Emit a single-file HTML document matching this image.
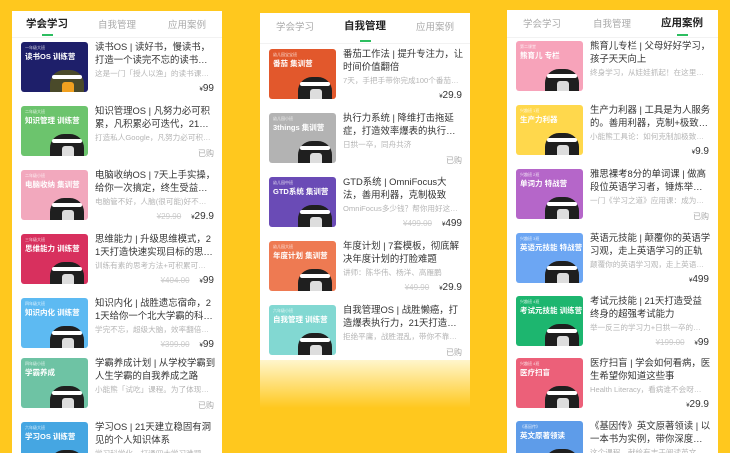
<!DOCTYPE html>
<html><head><meta charset="utf-8"><style>
*{margin:0;padding:0;box-sizing:border-box}
body{width:730px;height:453px;overflow:hidden;background:#FFC81E;font-family:"Liberation Sans","Noto Sans CJK SC",sans-serif;position:relative}
.pn{position:absolute;background:#fff;overflow:hidden}
.tab{position:absolute;top:6px;font-size:9.5px;color:#aaa;width:70px;text-align:center}
.tab.a{color:#222;font-size:10.5px;font-weight:bold;top:5px}
.ul{position:absolute;top:23px;width:11px;height:2px;background:#2DBE60}
.sep{position:absolute;left:0;right:0;top:26px;height:1px;background:#f2f2f2}
.it{position:absolute;left:9px;width:193px;height:52px}
.im{position:absolute;left:0;top:0;width:67px;height:50px;border-radius:3px;overflow:hidden}
.im .s{position:absolute;left:4px;top:3px;font-size:4px;color:rgba(255,255,255,.8)}
.im .n{position:absolute;left:4px;top:9px;font-size:7.5px;font-weight:bold;color:#fff;white-space:nowrap}
.im .b{position:absolute;right:4px;bottom:-8px;width:34px;height:30px;border-radius:14px 14px 4px 4px;background:#1f1f1f}
.im .h{position:absolute;right:6px;bottom:13px;width:30px;height:4px;background:#fff;border-radius:2px}
.im .f{position:absolute;right:14px;bottom:0;width:12px;height:10px;background:#ddd;border-radius:3px 3px 0 0}
.t{position:absolute;left:74px;top:-1px;width:121px;font-size:9.4px;line-height:12.5px;color:#333;display:-webkit-box;-webkit-line-clamp:2;-webkit-box-orient:vertical;overflow:hidden;word-break:break-all}
.d{position:absolute;left:74px;top:26px;width:118px;font-size:7.6px;color:#b5b5b5;white-space:nowrap;overflow:hidden;text-overflow:ellipsis}
.p{position:absolute;right:0;top:41px;font-size:10px;color:#333}
.p small{font-size:6px}
.p .o{color:#ccc;text-decoration:line-through;font-size:8px;margin-right:10px}
.p.g{color:#aaa;font-size:8px;top:42px}
</style></head><body>

<!-- LEFT -->
<div class="pn" style="left:12px;top:11px;width:210px;height:442px">
<div class="tab a" style="left:0">学会学习</div><div class="tab" style="left:70px">自我管理</div><div class="tab" style="left:140px">应用案例</div>
<div class="ul" style="left:30px"></div><div class="sep"></div>
<div class="it" style="top:31px"><div class="im" style="background:#1E1F6A"><div class="s">一年级大班</div><div class="n">读书OS 训练营</div><div class="b" style="background:#4a4a2a"></div><div class="h"></div><div class="f" style="background:#f0a020"></div></div><div class="t">读书OS | 读好书，慢读书，打造一个读完不忘的读书系统</div><div class="d">这是一门「授人以渔」的读书课：这是一门好课程</div><div class="p"><small>¥</small>99</div></div>
<div class="it" style="top:95px"><div class="im" style="background:#6CC46D"><div class="s">二年级大班</div><div class="n">知识管理 训练营</div><div class="b"></div><div class="h"></div><div class="f"></div></div><div class="t">知识管理OS | 凡努力必可积累，凡积累必可迭代，21天打造终生受用的知识管理系统</div><div class="d">打造私人Google，凡努力必可积累，凡积累</div><div class="p g">已购</div></div>
<div class="it" style="top:159px"><div class="im" style="background:#F2A8BD"><div class="s">二年级小班</div><div class="n">电脑收纳 集训营</div><div class="b"></div><div class="h"></div><div class="f"></div></div><div class="t">电脑收纳OS | 7天上手实操，给你一次搞定，终生受益的一站式电脑收纳</div><div class="d">电脑管不好，人脑(很可能)好不了！好不了</div><div class="p"><span class="o">¥29.90</span><small>¥</small>29.9</div></div>
<div class="it" style="top:223px"><div class="im" style="background:#D8305E"><div class="s">三年级大班</div><div class="n">思维能力 训练营</div><div class="b"></div><div class="h"></div><div class="f"></div></div><div class="t">思维能力 | 升级思维模式，21天打造快速实现目标的思考力</div><div class="d">训练有素的思考方法+可积累可迭代的思维</div><div class="p"><span class="o">¥404.00</span><small>¥</small>99</div></div>
<div class="it" style="top:287px"><div class="im" style="background:#5DBAF2"><div class="s">四年级大班</div><div class="n">知识内化 训练营</div><div class="b"></div><div class="h"></div><div class="f"></div></div><div class="t">知识内化 | 战胜遗忘宿命，21天给你一个北大学霸的科学记忆方法</div><div class="d">学完不忘，超级大脑，效率翻倍，get新技能</div><div class="p"><span class="o">¥399.00</span><small>¥</small>99</div></div>
<div class="it" style="top:347px"><div class="im" style="background:#6EC3A4"><div class="s">四年级小班</div><div class="n">学霸养成</div><div class="b"></div><div class="h"></div><div class="f"></div></div><div class="t">学霸养成计划 | 从学校学霸到人生学霸的自我养成之路</div><div class="d">小能熊「试吃」课程。为了体现试吃的意义</div><div class="p g">已购</div></div>
<div class="it" style="top:411px"><div class="im" style="background:#45A6E2"><div class="s">六年级大班</div><div class="n">学习OS 训练营</div><div class="b"></div><div class="h"></div><div class="f"></div></div><div class="t">学习OS | 21天建立稳固有洞见的个人知识体系</div><div class="d">学习科学化，打通四大学习难题，小能熊</div></div>
</div>

<!-- MIDDLE -->
<div style="position:absolute;left:260px;top:360px;width:210px;height:48px;background:linear-gradient(#fff6cc,#FFC81E)"></div>
<div class="pn" style="left:260px;top:13px;width:210px;height:347px">
<div class="tab" style="left:0">学会学习</div><div class="tab a" style="left:70px">自我管理</div><div class="tab" style="left:140px">应用案例</div>
<div class="ul" style="left:100px;top:27px"></div><div class="sep" style="top:30px"></div>
<div class="it" style="top:36px"><div class="im" style="background:#E2582C"><div class="s">幼儿园宝宝班</div><div class="n">番茄 集训营</div><div class="b"></div><div class="h"></div><div class="f"></div></div><div class="t">番茄工作法 | 提升专注力，让时间价值翻倍</div><div class="d">7天，手把手带你完成100个番茄，100个番茄</div><div class="p"><small>¥</small>29.9</div></div>
<div class="it" style="top:100px"><div class="im" style="background:#B3B3B3"><div class="s">幼儿园小班</div><div class="n">3things 集训营</div><div class="b"></div><div class="h"></div><div class="f"></div></div><div class="t">执行力系统 | 降维打击拖延症，打造效率爆表的执行力基本功</div><div class="d">日拱一卒，同舟共济</div><div class="p g">已购</div></div>
<div class="it" style="top:164px"><div class="im" style="background:#6A4BB6"><div class="s">幼儿园中班</div><div class="n">GTD系统 集训营</div><div class="b"></div><div class="h"></div><div class="f"></div></div><div class="t">GTD系统 | OmniFocus大法，善用利器，克制极致</div><div class="d">OmniFocus多少钱？帮你用好这个神器吧</div><div class="p"><span class="o">¥499.00</span><small>¥</small>499</div></div>
<div class="it" style="top:228px"><div class="im" style="background:#EE7A52"><div class="s">幼儿园大班</div><div class="n">年度计划 集训营</div><div class="b"></div><div class="h"></div><div class="f"></div></div><div class="t">年度计划 | 7套模板，彻底解决年度计划的打脸难题</div><div class="d">讲师：陈华伟、杨洋、高雁鹏</div><div class="p"><span class="o">¥49.90</span><small>¥</small>29.9</div></div>
<div class="it" style="top:292px"><div class="im" style="background:#82D8D2"><div class="s">六年级小班</div><div class="n">自我管理 训练营</div><div class="b"></div><div class="h"></div><div class="f"></div></div><div class="t">自我管理OS | 战胜懒癌，打造爆表执行力，21天打造终生受用的自我管理系统</div><div class="d">拒绝平庸，战胜混乱，带你不靠意志力</div><div class="p g">已购</div></div>
</div>

<!-- RIGHT -->
<div class="pn" style="left:507px;top:10px;width:211px;height:443px">
<div class="tab" style="left:0">学会学习</div><div class="tab" style="left:70px">自我管理</div><div class="tab a" style="left:140px">应用案例</div>
<div class="ul" style="left:170px;top:24px"></div><div class="sep" style="top:27px"></div>
<div class="it" style="top:31px"><div class="im" style="background:#F7A3BA"><div class="s">第二课堂</div><div class="n">熊育儿 专栏</div><div class="b"></div><div class="h"></div><div class="f"></div></div><div class="t">熊育儿专栏 | 父母好好学习，孩子天天向上</div><div class="d">终身学习，从娃娃抓起！在这里和奶爸奶妈</div></div>
<div class="it" style="top:95px"><div class="im" style="background:#FFD84C"><div class="s">兴趣班 1班</div><div class="n">生产力利器</div><div class="b"></div><div class="h"></div><div class="f"></div></div><div class="t">生产力利器 | 工具是为人服务的。善用利器，克制+极致，让工具为你服务</div><div class="d">小能熊工具论：如何克制加极致地用工具</div><div class="p"><small>¥</small>9.9</div></div>
<div class="it" style="top:159px"><div class="im" style="background:#B566C9"><div class="s">兴趣班 2班</div><div class="n">单词力 特战营</div><div class="b"></div><div class="h"></div><div class="f"></div></div><div class="t">雅思裸考8分的单词课 | 做高段位英语学习者，锤炼举一反三、触类旁通</div><div class="d">一门《学习之道》应用课：成为一个高手</div><div class="p g">已购</div></div>
<div class="it" style="top:223px"><div class="im" style="background:#6CA6F3"><div class="s">兴趣班 3班</div><div class="n">英语元技能 特战营</div><div class="b"></div><div class="h"></div><div class="f"></div></div><div class="t">英语元技能 | 颠覆你的英语学习观，走上英语学习的正轨</div><div class="d">颠覆你的英语学习观，走上英语学习的正轨</div><div class="p"><small>¥</small>499</div></div>
<div class="it" style="top:286px"><div class="im" style="background:#1DB66F"><div class="s">兴趣班 4班</div><div class="n">考试元技能 训练营</div><div class="b"></div><div class="h"></div><div class="f"></div></div><div class="t">考试元技能 | 21天打造受益终身的超强考试能力</div><div class="d">举一反三的学习力+日拱一卒的管理力</div><div class="p"><span class="o">¥199.00</span><small>¥</small>99</div></div>
<div class="it" style="top:348px"><div class="im" style="background:#EC6079"><div class="s">兴趣班 4班</div><div class="n">医疗扫盲</div><div class="b"></div><div class="h"></div><div class="f"></div></div><div class="t">医疗扫盲 | 学会如何看病，医生希望你知道这些事</div><div class="d">Health Literacy，看病谁不会呀！ 其实</div><div class="p"><small>¥</small>29.9</div></div>
<div class="it" style="top:411px"><div class="im" style="background:#5E9CE9"><div class="s">《基因传》</div><div class="n">英文原著领读</div><div class="b"></div><div class="h"></div><div class="f"></div></div><div class="t">《基因传》英文原著领读 | 以一本书为实例，带你深度阅读英文原著</div><div class="d">这个课程，献给有志于阅读英文原著的人</div></div>
</div>
</body></html>
